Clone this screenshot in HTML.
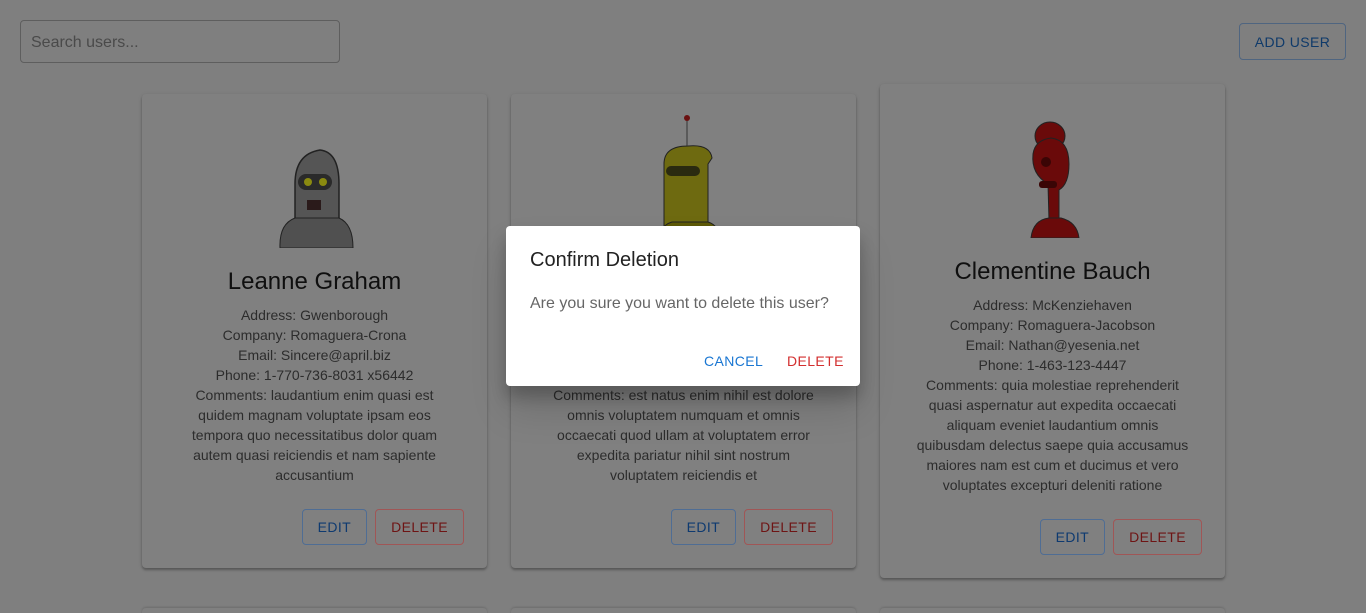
<!DOCTYPE html>
<html style="height:613px;overflow:hidden"><head><meta charset="utf-8"><style>
*{box-sizing:border-box;margin:0;padding:0}
body{width:1366px;height:613px;overflow:hidden;background:#7f7f7f;font-family:"Liberation Sans",sans-serif;position:relative}
.search{position:absolute;left:20px;top:20px;width:320px;height:43px;border:1px solid #5e5e5e;border-radius:4px;color:#4a4a4a;font-size:16px;padding:13px 10px}
.add{position:absolute;left:1239px;top:23px;width:107px;height:37px;border:1px solid #4f6580;border-radius:4px;color:#0f3a6a;font-size:14px;letter-spacing:.4px;text-align:center;line-height:37px}
.card{position:absolute;width:345px;background:#808080;border-radius:4px;box-shadow:0 2px 2px rgba(0,0,0,.25),0 1px 4px rgba(0,0,0,.12);text-align:center}
.card svg{display:block;margin:0 auto}
.name{font-size:24px;color:#0f0f0f;margin-top:19px;line-height:30px}
.det{font-size:14px;line-height:20px;color:#2c2c2c;margin:8px 0 0;white-space:nowrap}
.btns{position:absolute;right:23px;bottom:23px;display:flex;gap:8px}
.b{height:36px;border-radius:4px;font-size:14px;letter-spacing:.4px;line-height:34px;padding:0 15px}
.e{border:1px solid #4f6d94;color:#0e3a70}
.d{border:1px solid #a05656;color:#6e1414}
.next{position:absolute;top:608px;width:345px;height:20px;background:#808080;border-radius:4px;box-shadow:0 -1px 2px rgba(0,0,0,.15)}
.dlg{position:absolute;left:506px;top:226px;width:354px;height:160px;background:#fff;border-radius:4px;box-shadow:0 11px 15px rgba(0,0,0,.2),0 24px 38px rgba(0,0,0,.14)}
.dt{position:absolute;left:24px;top:23px;font-size:20px;color:#222}
.db{position:absolute;left:24px;top:69px;font-size:16px;color:#666}
.dc{position:absolute;left:198px;top:127px;font-size:14px;color:#1976d2;letter-spacing:.4px}
.dd{position:absolute;left:281px;top:127px;font-size:14px;color:#d32f2f;letter-spacing:.4px}
</style></head><body>
<div class="search">Search users...</div>
<div class="add">ADD USER</div>

<div class="card" style="left:142px;top:94px;height:474px">
<svg width="120" height="154" viewBox="0 0 120 154" style="margin-top:0"><g transform="translate(0,20)">
<path d="M40 134 V70 Q40 40 65 36 Q84 38 84 70 V134 Z" fill="#555" stroke="#222" stroke-width="1.5"/>
<path d="M25 134 Q24 110 40 104 H84 Q98 110 98 134Z" fill="#505050" stroke="#222"/>
<rect x="43" y="60" width="34" height="16" rx="8" fill="#2a2a2a"/>
<circle cx="53" cy="68" r="4" fill="#8a8a10"/><circle cx="68" cy="68" r="4" fill="#8a8a10"/>
<rect x="52" y="86" width="14" height="10" fill="#2a1a1a"/></g></svg>
<div class="name">Leanne Graham</div>
<div class="det">Address: Gwenborough<br>Company: Romaguera-Crona<br>Email: Sincere@april.biz<br>Phone: 1-770-736-8031 x56442<br>Comments: laudantium enim quasi est<br>quidem magnam voluptate ipsam eos<br>tempora quo necessitatibus dolor quam<br>autem quasi reiciendis et nam sapiente<br>accusantium</div>
<div class="btns"><div class="b e">EDIT</div><div class="b d">DELETE</div></div>
</div>

<div class="card" style="left:511px;top:94px;height:474px">
<svg width="120" height="154" viewBox="0 0 120 154">
<line x1="63" y1="24" x2="63" y2="58" stroke="#333"/>
<circle cx="63" cy="24" r="3" fill="#6a1010"/>
<path d="M40 154 V70 Q40 52 64 52 Q86 50 88 64 L84 70 V154Z" fill="#6e6a10" stroke="#222"/>
<rect x="42" y="72" width="34" height="10" rx="5" fill="#2a2a10"/>
<path d="M32 154 Q34 132 48 128 H84 Q98 132 96 154Z" fill="#5e5a08" stroke="#222"/>
</svg>
<div class="name">&nbsp;</div>
<div class="det"><br><br><br><br>Comments: est natus enim nihil est dolore<br>omnis voluptatem numquam et omnis<br>occaecati quod ullam at voluptatem error<br>expedita pariatur nihil sint nostrum<br>voluptatem reiciendis et</div>
<div class="btns"><div class="b e">EDIT</div><div class="b d">DELETE</div></div>
</div>

<div class="card" style="left:880px;top:84px;height:494px">
<svg width="120" height="154" viewBox="0 0 120 154">
<ellipse cx="57" cy="52" rx="15" ry="14" fill="#6a0a0a" stroke="#222"/>
<path d="M55 100 Q38 90 40 70 Q42 56 58 54 Q76 56 76 80 Q76 100 66 106 V136 H56Z" fill="#6a0a0a" stroke="#222"/>
<circle cx="53" cy="78" r="5" fill="#3a0505"/>
<rect x="46" y="97" width="18" height="7" rx="3" fill="#3a0505"/>
<path d="M38 154 Q40 136 56 134 H68 Q84 138 86 154Z" fill="#6a0a0a" stroke="#222"/>
</svg>
<div class="name">Clementine Bauch</div>
<div class="det">Address: McKenziehaven<br>Company: Romaguera-Jacobson<br>Email: Nathan@yesenia.net<br>Phone: 1-463-123-4447<br>Comments: quia molestiae reprehenderit<br>quasi aspernatur aut expedita occaecati<br>aliquam eveniet laudantium omnis<br>quibusdam delectus saepe quia accusamus<br>maiores nam est cum et ducimus et vero<br>voluptates excepturi deleniti ratione</div>
<div class="btns"><div class="b e">EDIT</div><div class="b d">DELETE</div></div>
</div>

<div class="next" style="left:142px"></div><div class="next" style="left:511px"></div><div class="next" style="left:880px"></div>

<div class="dlg">
<div class="dt">Confirm Deletion</div>
<div class="db">Are you sure you want to delete this user?</div>
<div class="dc">CANCEL</div>
<div class="dd">DELETE</div>
</div>
</body></html>
